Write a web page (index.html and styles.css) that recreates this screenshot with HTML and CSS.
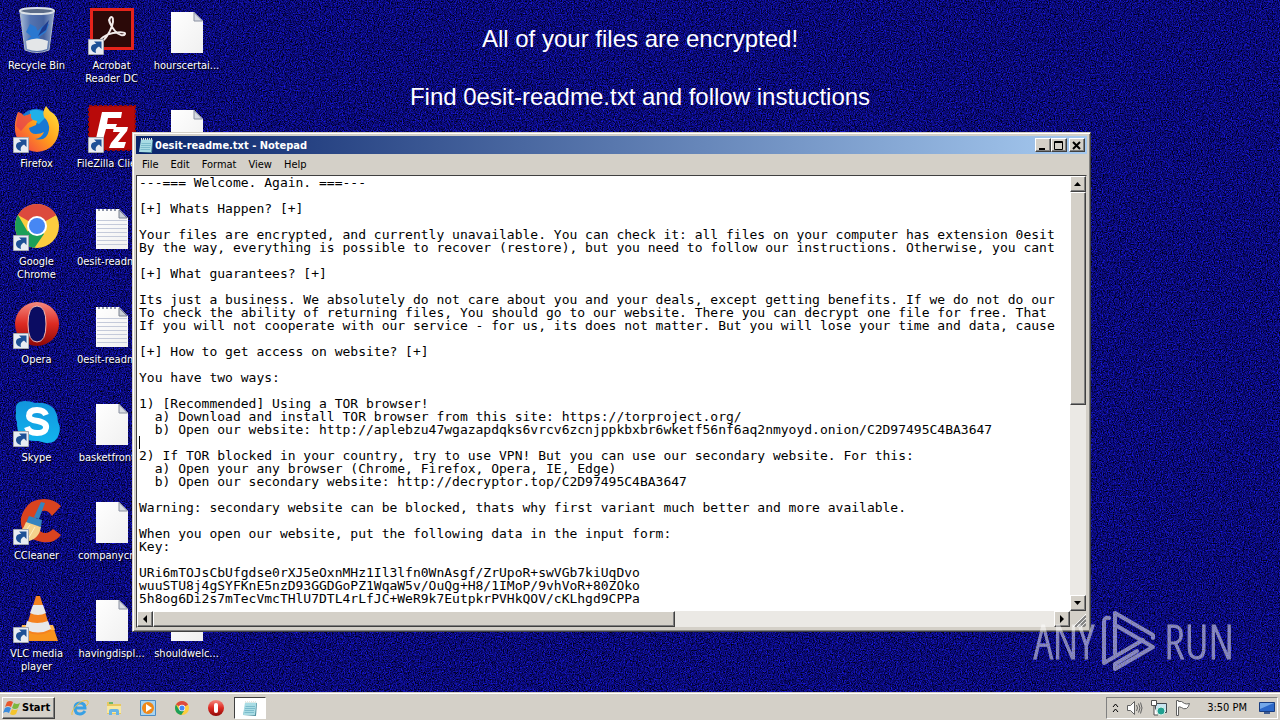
FILE: index.html
```
<!DOCTYPE html>
<html lang="en">
<head>
    <meta charset="UTF-8">
    <meta name="viewport" content="width=device-width, initial-scale=1.0">
    <title>Desktop</title>
    <link rel="stylesheet" href="styles.css">
</head>
<body>

    <!-- Shared symbols -->
    <svg class="defs" width="0" height="0" aria-hidden="true">
        <defs>
            <filter id="noise" x="0" y="0" width="100%" height="100%" color-interpolation-filters="sRGB">
                <feTurbulence type="fractalNoise" baseFrequency="0.83" numOctaves="3" seed="4"/>
                <feColorMatrix values="0.2 0 0 0 -0.06  0.2 0 0 0 -0.06  1.4 0 0 0 -0.24  0 0 0 0 1"/>
            </filter>
            <linearGradient id="paperFill" x1="0" y1="0" x2="1" y2="1">
                <stop offset="0" stop-color="#fff"/><stop offset="1" stop-color="#f0f0f0"/>
            </linearGradient>
            <linearGradient id="operaFill" x1="0" y1="0" x2="0" y2="1">
                <stop offset="0" stop-color="#f58a80"/><stop offset=".5" stop-color="#dd2a22"/><stop offset="1" stop-color="#8e0806"/>
            </linearGradient>
            <linearGradient id="foxFill" x1="1" y1="0" x2="0" y2="1">
                <stop offset="0" stop-color="#ffe83c"/><stop offset=".5" stop-color="#ff9a1c"/><stop offset="1" stop-color="#f0304c"/>
            </linearGradient>
            <linearGradient id="skypeFill" x1="0" y1="0" x2="0" y2="1">
                <stop offset="0" stop-color="#1295dc"/><stop offset="1" stop-color="#12b4ee"/>
            </linearGradient>
            <linearGradient id="binFill" x1="0" y1="0" x2="1" y2="0">
                <stop offset="0" stop-color="#a9bdd8"/><stop offset=".3" stop-color="#5574b0"/><stop offset=".7" stop-color="#45629f"/><stop offset="1" stop-color="#93a8ca"/>
            </linearGradient>

            <symbol id="shortcut" viewBox="0 0 16 16">
                <path fill="#e8ecf2" stroke="#a4a8b0" d="M.5.5h15v15H.5z"/>
                <path fill="#1d5096" d="M6 2.500h7.500V10l-2.500-2.500C8 9 7 11 8 14c-4-1-6-4-4.500-7C4.200 5.700 6 5 8.300 4.800z"/>
            </symbol>
            <symbol id="file" viewBox="0 0 32 42">
                <path fill="url(#paperFill)" d="M0 0h23l9 9v32H0z"/>
                <path fill="#d6dae2" stroke="#8a90a0" d="M23 .5v8.500h8.500z"/>
            </symbol>
            <symbol id="textfile" viewBox="0 0 32 42">
                <path fill="url(#paperFill)" d="M0 1h23l9 9v31H0z"/>
                <path stroke="#c4cada" d="M1 12.500h30M1 16.500h30M1 20.500h30M1 24.500h30M1 28.500h30M1 32.500h30M1 36.500h30"/>
                <path stroke="#8e96a8" stroke-width="2" stroke-dasharray="2 2" d="M2 2h20"/>
                <path fill="#c8ced6" stroke="#7a8290" d="M23 2v8h8z"/>
            </symbol>
            <symbol id="chrome" viewBox="0 0 44 44">
                <circle cx="22" cy="22" r="22" fill="#fccd3f"/>
                <path fill="#dc4a3e" d="M22 22 3 11a22 22 0 0 1 38.100 0z"/>
                <path fill="#dc4a3e" d="M22 11h19.100L32 16z"/>
                <path fill="#1c9f58" d="M3 11a22 22 0 0 0 16.500 32.800L29 30 22 22 12.500 27.500z"/>
                <circle cx="22" cy="22" r="10" fill="#fff"/>
                <circle cx="22" cy="22" r="8" fill="#4687f4"/>
            </symbol>
            <symbol id="opera" viewBox="0 0 44 44">
                <circle cx="22" cy="22" r="22" fill="url(#operaFill)"/>
                <path fill="#0b0c62" stroke="#f4bcb4" d="M22 4q9 0 9 18t-9 18-9-18 9-18z"/>
            </symbol>
            <symbol id="opera-small" viewBox="0 0 16 16">
                <circle cx="8" cy="8" r="8" fill="url(#operaFill)"/>
                <rect x="6" y="3" width="4" height="10" rx="2" fill="#fff"/>
            </symbol>
            <symbol id="notepad" viewBox="0 0 16 16">
                <path fill="#4c8c9c" d="m4 3 11 0-1 13L1 15z"/>
                <path fill="#a8dce4" d="M3 2.500h11.500L13 15H1z"/>
                <path stroke="#7cbccc" d="M3.500 6.500H13M3 8.500h10M2.500 10.500H12M2.500 12.500h9.500"/>
                <path stroke="#e8e8e0" stroke-width="2" stroke-dasharray="1 1" d="M3 2h12"/>
            </symbol>
        </defs>
    </svg>

    <main class="desktop">
        <svg class="wallpaper" aria-hidden="true"><rect width="100%" height="100%" filter="url(#noise)"/></svg>

        <div class="message">
            <p>All of your files are encrypted!</p>
            <p>Find 0esit-readme.txt and follow instuctions</p>
        </div>

        <!-- Desktop icons, three to a row -->
        <div class="icons">
            <div class="icon">
                <svg class="art" viewBox="0 0 48 48">
                    <path fill="url(#binFill)" d="M7 5h34l-5 39q-12 4-24 0z"/>
                    <path fill="#2a78d0" d="m17 18 6 3 3 8-7 2-6-5zM30 20l6-2-3 8-7 5 3 5-7-3-8 1 7-6z"/>
                    <path fill="#1c3c90" d="m36 14-3 10-8 6 4-8z"/>
                    <path fill="#e4e6e8" d="M13 35q11-5 22 0l-1 8q-10 4-20 0z"/>
                    <ellipse cx="24" cy="5" rx="17" ry="3" fill="#5c6c88" stroke="#dce2e8" stroke-width="2"/>
                    <path fill="none" stroke="#b0bccc" d="m7 6 5 38q12 5 24 0l5-38"/>
                </svg>
                <span>Recycle Bin</span>
            </div>
            <div class="icon">
                <svg class="art" viewBox="0 0 48 48">
                    <path fill="#2b0908" stroke="#e5231b" stroke-width="3" d="M3.500 3.500h41v39h-41z"/>
                    <path fill="none" stroke="#f2eaea" stroke-width="2" d="M22 12c3-3 4 2 2 8s-8 16-11 15 5-7 12-8 13-1 12 1-6 2-10-3-7-11-5-13z"/>
                </svg>
                <svg class="arrow"><use href="#shortcut"/></svg>
                <span>Acrobat<br>Reader DC</span>
            </div>
            <div class="icon">
                <svg class="paper"><use href="#file"/></svg>
                <span>hourscertai...</span>
            </div>

            <div class="icon">
                <svg class="art" viewBox="0 0 48 48">
                    <circle cx="23" cy="23" r="18" fill="#1778d4"/>
                    <path fill="#20b0e8" d="M17 7q11-4 17 5l-8 8-9-4z"/>
                    <path fill="url(#foxFill)" d="M5 8q4 1 6 4l7-2q-1 4 2 6l4 1-1 4-7 3q1 6 7 6 5 0 8-2-3 7-9 7 12 3 14-9 1-7-5-13-2-5 2-11 3 5 8 8 6 6 5 16-2 20-22 22Q5 46 2 27q-1-9 3-19z"/>
                    <path fill="#e33b50" d="M5 8q4 1 6 4l7-2q-1 4 2 6l-5 3-7 8-5-5z" opacity=".65"/>
                </svg>
                <svg class="arrow"><use href="#shortcut"/></svg>
                <span>Firefox</span>
            </div>
            <div class="icon">
                <svg class="art" viewBox="0 0 48 48">
                    <path fill="#b80a0a" stroke="#9a0808" stroke-width="2" stroke-dasharray="3 2" d="M1 2h46v44H1z"/>
                    <path fill="#fff" d="M14 8h20l-1 6H20l-1 6h10l-2 5h-9l-4 14H7zM26 23h14l-1 4-9 11h8l-2 6H21l2-5 9-11h-7z"/>
                </svg>
                <svg class="arrow"><use href="#shortcut"/></svg>
                <span>FileZilla Client</span>
            </div>
            <div class="icon">
                <svg class="paper"><use href="#file"/></svg>
            </div>

            <div class="icon">
                <svg class="art round"><use href="#chrome"/></svg>
                <svg class="arrow"><use href="#shortcut"/></svg>
                <span>Google<br>Chrome</span>
            </div>
            <div class="icon">
                <svg class="paper"><use href="#textfile"/></svg>
                <span>0esit-readm...</span>
            </div>

            <div class="icon first-col">
                <svg class="art round"><use href="#opera"/></svg>
                <svg class="arrow"><use href="#shortcut"/></svg>
                <span>Opera</span>
            </div>
            <div class="icon">
                <svg class="paper"><use href="#textfile"/></svg>
                <span>0esit-readm...</span>
            </div>

            <div class="icon first-col">
                <svg class="art" viewBox="0 0 48 48">
                    <path fill="url(#skypeFill)" d="M3 14Q1 3 12 3q6 0 10 2 22-2 23 19 3 5 1 12-3 10-13 9l-8-2Q3 44 4 24q-2-4-1-10z"/>
                    <path fill="none" stroke="#fff" stroke-width="6" d="M33 17q-2-5-9-5-8 0-8 6 0 4 9 5 9 2 8 7-1 5-9 5-8 0-10-6"/>
                </svg>
                <svg class="arrow"><use href="#shortcut"/></svg>
                <span>Skype</span>
            </div>
            <div class="icon">
                <svg class="paper"><use href="#file"/></svg>
                <span>basketfront...</span>
            </div>

            <div class="icon first-col">
                <svg class="art" viewBox="0 0 48 48">
                    <path fill="#d9431f" d="M48 10 39 20q-5-8-12-4-8 7-2 17 7 8 15 0l8 6q-7 9-19 7Q6 42 8 22 13 3 31 3q10 0 17 7z"/>
                    <path fill="#3484c0" d="m28 6 4 1-6 16-5-2zM16 20l13 4-1 7-15-4z"/>
                    <path fill="#f4d28c" d="m13 26 15 5q-2 13-16 15L1 39q8-2 12-13z"/>
                    <path stroke="#fff0c0" d="m17 29-9 12M22 31l-7 12"/>
                </svg>
                <svg class="arrow"><use href="#shortcut"/></svg>
                <span>CCleaner</span>
            </div>
            <div class="icon">
                <svg class="paper"><use href="#file"/></svg>
                <span>companycn...</span>
            </div>

            <div class="icon first-col">
                <svg class="art" viewBox="0 0 48 48">
                    <path fill="#f7931e" d="M9 32h31l5 15H6z"/>
                    <path fill="#ffb64c" d="M9 31h31l2 5H8z"/>
                    <path fill="#f58220" d="M23 2h4l11 35q-13 7-26 0z"/>
                    <path fill="#e8e8ea" d="M20 11h10l3 8q-8 4-16 0zM14 27q10 4 21 0l3 8q-13 7-26 0z"/>
                </svg>
                <svg class="arrow"><use href="#shortcut"/></svg>
                <span>VLC media<br>player</span>
            </div>
            <div class="icon">
                <svg class="paper"><use href="#file"/></svg>
                <span>havingdispl...</span>
            </div>
            <div class="icon">
                <svg class="paper"><use href="#file"/></svg>
                <span>shouldwelc...</span>
            </div>
        </div>

        <!-- Notepad window -->
        <section class="window">
            <header class="titlebar">
                <svg class="small-icon"><use href="#notepad"/></svg>
                <h1>0esit-readme.txt - Notepad</h1>
                <button class="raised" aria-label="Minimize"><svg width="10" height="9"><path d="M1 7h6v2H1z"/></svg></button>
                <button class="raised" aria-label="Maximize"><svg width="10" height="9"><path fill="none" stroke="#000" d="M.5.5h8v8h-8zM0 1.500h9"/></svg></button>
                <button class="raised close" aria-label="Close"><svg width="10" height="9"><path fill="none" stroke="#000" stroke-width="2" d="m1 1 7 7M8 1 1 8"/></svg></button>
            </header>
            <nav class="menu">
                <button>File</button>
                <button>Edit</button>
                <button>Format</button>
                <button>View</button>
                <button>Help</button>
            </nav>
            <div class="editor">
                <div class="page">
                    <textarea aria-label="Text" wrap="off" spellcheck="false">---=== Welcome. Again. ===---

[+] Whats Happen? [+]

Your files are encrypted, and currently unavailable. You can check it: all files on your computer has extension 0esit
By the way, everything is possible to recover (restore), but you need to follow our instructions. Otherwise, you cant

[+] What guarantees? [+]

Its just a business. We absolutely do not care about you and your deals, except getting benefits. If we do not do our
To check the ability of returning files, You should go to our website. There you can decrypt one file for free. That
If you will not cooperate with our service - for us, its does not matter. But you will lose your time and data, cause

[+] How to get access on website? [+]

You have two ways:

1) [Recommended] Using a TOR browser!
  a) Download and install TOR browser from this site: https://torproject.org/
  b) Open our website: http://aplebzu47wgazapdqks6vrcv6zcnjppkbxbr6wketf56nf6aq2nmyoyd.onion/C2D97495C4BA3647

2) If TOR blocked in your country, try to use VPN! But you can use our secondary website. For this:
  a) Open your any browser (Chrome, Firefox, Opera, IE, Edge)
  b) Open our secondary website: http://decryptor.top/C2D97495C4BA3647

Warning: secondary website can be blocked, thats why first variant much better and more available.

When you open our website, put the following data in the input form:
Key:

URi6mTOJsCbUfgdse0rXJ5eOxnMHz1Il3lfn0WnAsgf/ZrUpoR+swVGb7kiUqDvo
wuuSTU8j4gSYFKnE5nzD93GGDGoPZ1WqaW5v/OuQg+H8/1IMoP/9vhVoR+80ZOko
5h8og6Di2s7mTecVmcTHlU7DTL4rLfJC+WeR9k7EutpkrPVHkQOV/cKLhgd9CPPa</textarea>
                    <i class="caret"></i>
                </div>
                <div class="scroll vertical">
                    <button class="raised" aria-label="Scroll up"><svg width="8" height="8"><path d="M0 6h7L3.500 2z"/></svg></button>
                    <div class="thumb raised"></div>
                    <button class="raised" aria-label="Scroll down"><svg width="8" height="8"><path d="M0 2h7L3.500 6z"/></svg></button>
                </div>
                <div class="scroll horizontal">
                    <button class="raised" aria-label="Scroll left"><svg width="8" height="8"><path d="M6 0v8L2 4z"/></svg></button>
                    <div class="thumb raised"></div>
                    <button class="raised" aria-label="Scroll right"><svg width="8" height="8"><path d="M2 0v8l4-4z"/></svg></button>
                </div>
                <svg class="grip" viewBox="0 0 16 16"><path stroke="#fff" d="M3 16 16 3M7 16l9-9M11 16l5-5"/><path stroke="#808080" stroke-width="2" d="M5 16 16 5M9 16l7-7M13 16l3-3"/></svg>
            </div>
        </section>

        <div class="watermark">
            <span>ANY</span>
            <svg width="54" height="62" viewBox="0 0 54 62" fill="none" stroke="#fff" stroke-width="4" stroke-linejoin="round" stroke-linecap="round">
                <path d="M7 8q-5-1-5 4v41l39-23"/>
                <path d="M13 44V3l38 22v3M15 16l36 21-38 22v-5l22-13"/>
            </svg>
            <span>RUN</span>
        </div>
    </main>

    <footer class="taskbar">
        <button class="start raised">
            <svg width="18" height="16" viewBox="0 0 18 16">
                <path fill="#e8582c" d="M4 2q3-2 6 0L8 7Q5 5 2 7z"/>
                <path fill="#7cb83c" d="M11 3q3 2 6 0l-2 5q-3 2-6 0z"/>
                <path fill="#3c8cdc" d="M2 8q3-2 6 0l-2 5q-3-2-6 0z"/>
                <path fill="#f4c42c" d="M9 9q3 2 6 0l-2 5q-3 2-6 0z"/>
            </svg>
            Start
        </button>
        <nav class="quick">
            <button aria-label="Internet Explorer">
                <svg width="18" height="18" viewBox="0 0 18 18" fill="none">
                    <path stroke="#38a0e4" stroke-width="3" d="M14 12q-2 3-5 3-5 0-5-6 0-5 5-5t5 5H5"/>
                    <path stroke="#ecc040" d="M1 16Q0 12 6 6t11-4q1 3-2 5"/>
                </svg>
            </button>
            <button aria-label="Explorer">
                <svg width="18" height="18" viewBox="0 0 18 18">
                    <path fill="#e8c860" d="M2 3h5l1 2h8v10H2z"/>
                    <path fill="#6cb86c" d="M4 3h4v2H4z"/>
                    <path fill="#f8e8a0" d="M2 7h14v7H2z"/>
                    <path fill="#68b4e4" d="M4 16v-4q0-2 2-2h6q2 0 2 2v4h-3v-3H7v3z"/>
                </svg>
            </button>
            <button aria-label="Media Player">
                <svg width="18" height="18" viewBox="0 0 18 18">
                    <path fill="#a8d4f0" stroke="#4c8cc4" d="M1.500 1.500h15v15h-15z"/>
                    <circle cx="9" cy="9" r="6" fill="#f08818"/><path fill="#fff" d="m7 5 6 4-6 4z"/>
                </svg>
            </button>
            <button aria-label="Chrome"><svg width="14" height="14"><use href="#chrome"/></svg></button>
            <button aria-label="Opera"><svg width="16" height="16"><use href="#opera-small"/></svg></button>
            <button class="active" aria-label="Notepad"><svg width="16" height="16"><use href="#notepad"/></svg></button>
        </nav>
        <div class="tray">
            <svg width="7" height="10" viewBox="0 0 7 10" fill="none" stroke="#000"><path d="m1 4 2.500-3L6 4M1 9l2.500-3L6 9"/></svg>
            <svg width="16" height="14" viewBox="0 0 16 14" stroke="#606060" fill="#fff"><path d="M.5 4.500h3l4-4v13l-4-4h-3z"/><path fill="none" d="M9.500 4q2 3 0 6M11.500 2.500q3 4.500 0 9M13.500 1.500q3 5.500 0 11"/></svg>
            <svg width="16" height="16" viewBox="0 0 16 16"><path fill="#c8e4f0" stroke="#404850" d="M4.500 3.500h11v9h-11z"/><path fill="#fff" stroke="#505050" d="M.5.5h5v5h-5zM3 6v9h4"/><circle cx="10" cy="11" r="4" fill="#20a090" stroke="#d8f0e8"/></svg>
            <svg width="16" height="16" viewBox="0 0 16 16"><path fill="#fff" stroke="#606060" d="M1.500 15.500v-15h2v1q3-1 6 2 2 1 5 0-1 4-3 5-3 1-5-1-2-1-3-.5v8.500z"/></svg>
            <time>3:50 PM</time>
            <svg width="16" height="12" viewBox="0 0 16 12"><path fill="#2c68c8" stroke="#183c80" d="M.5.5h15v9H.5z"/><path fill="#74a8e8" d="M1 1h14L1 7z"/><path fill="#405c90" d="M5 10h6v2H5z"/></svg>
        </div>
    </footer>

</body>
</html>
```
FILE: styles.css
```
/* General Styles */
* {
    box-sizing: border-box;
}

body {
    margin: 0;
    height: 100vh;
    display: flex;
    flex-direction: column;
    overflow: hidden;
    background: #0a0a6a;
    color: #000;
    font-family: "DejaVu Sans Condensed", "Noto Sans", sans-serif;
    font-size: 11px;
    line-height: 13px;
}

button {
    margin: 0;
    padding: 0;
    border: 0;
    background: none;
    color: inherit;
    font: inherit;
}

.defs {
    position: absolute;
}

.raised {
    background: #d4d0c8;
    border: 1px solid;
    border-color: #fff #404040 #404040 #fff;
    box-shadow: inset -1px -1px #808080;
}

/* Desktop */
.desktop {
    flex: 1;
    min-height: 0;
    position: relative;
}

.wallpaper {
    position: absolute;
    width: 100%;
    height: 100%;
}

.message {
    position: absolute;
    top: 24px;
    width: 100%;
    color: #fff;
    font-family: "Liberation Sans", sans-serif;
    font-size: 24px;
    line-height: 29px;
    text-align: center;
}

.message p {
    margin: 0 0 29px;
}

/* Desktop Icons */
.icons {
    position: relative;
    display: grid;
    grid-template-columns: repeat(3, 75px);
    grid-auto-rows: 98px;
    padding-top: 6px;
    width: 225px;
    color: #fff;
    text-align: center;
}

.icon {
    position: relative;
    display: flex;
    flex-direction: column;
    align-items: center;
    gap: 5px;
    padding-right: 2px;
}

.icon.first-col {
    grid-column: 1;
}

.icon span {
    white-space: nowrap;
    text-shadow: 1px 1px 1px #000;
}

.art {
    width: 48px;
    height: 48px;
}

.art.round {
    padding: 2px;
}

.paper {
    width: 32px;
    height: 48px;
    padding-top: 6px;
}

.arrow {
    position: absolute;
    left: 13px;
    top: 33px;
    width: 16px;
    height: 16px;
}

/* Window */
.window {
    position: absolute;
    left: 132px;
    right: 189px;
    top: 132px;
    bottom: 60px;
    display: flex;
    flex-direction: column;
    padding: 3px;
    background: #d4d0c8;
    border: 1px solid;
    border-color: #d4d0c8 #404040 #404040 #d4d0c8;
    box-shadow: inset 1px 1px #fff, inset -1px -1px #808080;
}

.titlebar {
    display: flex;
    align-items: center;
    height: 18px;
    padding: 0 2px;
    background: linear-gradient(to right, #0a246a, #a6caf0);
    color: #fff;
}

.titlebar h1 {
    flex: 1;
    margin: 0 0 0 1px;
    font-size: 11px;
    font-weight: bold;
}

.small-icon {
    width: 16px;
    height: 16px;
}

.titlebar button {
    display: flex;
    align-items: center;
    justify-content: center;
    width: 16px;
    height: 14px;
}

.titlebar .close {
    margin-left: 2px;
}

.menu {
    display: flex;
    height: 21px;
}

.menu button {
    padding: 0 6px;
}

.editor {
    flex: 1;
    min-height: 0;
    display: grid;
    grid-template-columns: 1fr 16px;
    grid-template-rows: 1fr 16px;
    border: 1px solid;
    border-color: #404040 #d4d0c8 #d4d0c8 #404040;
}

.page {
    position: relative;
    display: flex;
}

.page textarea {
    flex: 1;
    padding: 0 2px;
    border: 0;
    outline: 0;
    resize: none;
    overflow: hidden;
    background: #fff;
    color: #000;
    font-family: "DejaVu Sans Mono", monospace;
    font-size: 13px;
    line-height: 13px;
}

.caret {
    position: absolute;
    left: 2px;
    top: 260px;
    width: 1px;
    height: 13px;
    background: #000;
}

/* Scrollbars */
.scroll {
    display: flex;
    justify-content: space-between;
    background: #ebe9e5;
}

.scroll button {
    display: flex;
    align-items: center;
    justify-content: center;
    width: 16px;
    height: 16px;
}

.scroll.vertical {
    flex-direction: column;
}

.vertical .thumb {
    height: 49%;
    margin-bottom: auto;
}

.horizontal .thumb {
    width: 56%;
    margin-right: auto;
}

.grip {
    width: 16px;
    height: 16px;
}

/* Watermark */
.watermark {
    position: absolute;
    right: 46px;
    bottom: 20px;
    display: flex;
    align-items: center;
    gap: 8px;
    color: #fff;
    font-family: "Open Sans Condensed Light", "Open Sans Condensed", "Liberation Sans Narrow", sans-serif;
    font-size: 48px;
    font-weight: 300;
    line-height: 62px;
    -webkit-text-stroke: 1px #fff;
    opacity: 0.5;
}

/* Taskbar */
.taskbar {
    display: flex;
    align-items: center;
    height: 28px;
    padding: 2px 2px 0;
    background: #d4d0c8;
    border-top: 1px solid #d4d0c8;
    box-shadow: inset 0 1px #fff;
}

.start {
    display: flex;
    align-items: center;
    gap: 1px;
    width: 53px;
    height: 22px;
    font-weight: bold;
}

.quick {
    display: flex;
    gap: 2px;
    margin-left: 9px;
}

.quick button {
    display: flex;
    align-items: center;
    justify-content: center;
    width: 32px;
    height: 22px;
}

.quick .active {
    background: #fff;
    border: 1px solid;
    border-color: #404040 #fff #fff #404040;
}

.tray {
    display: flex;
    align-items: center;
    gap: 8px;
    height: 22px;
    margin-left: auto;
    padding: 0 2px 0 5px;
    border: 1px solid;
    border-color: #808080 #fff #fff #808080;
}

.tray time {
    margin: 0 4px 0 8px;
}
```
